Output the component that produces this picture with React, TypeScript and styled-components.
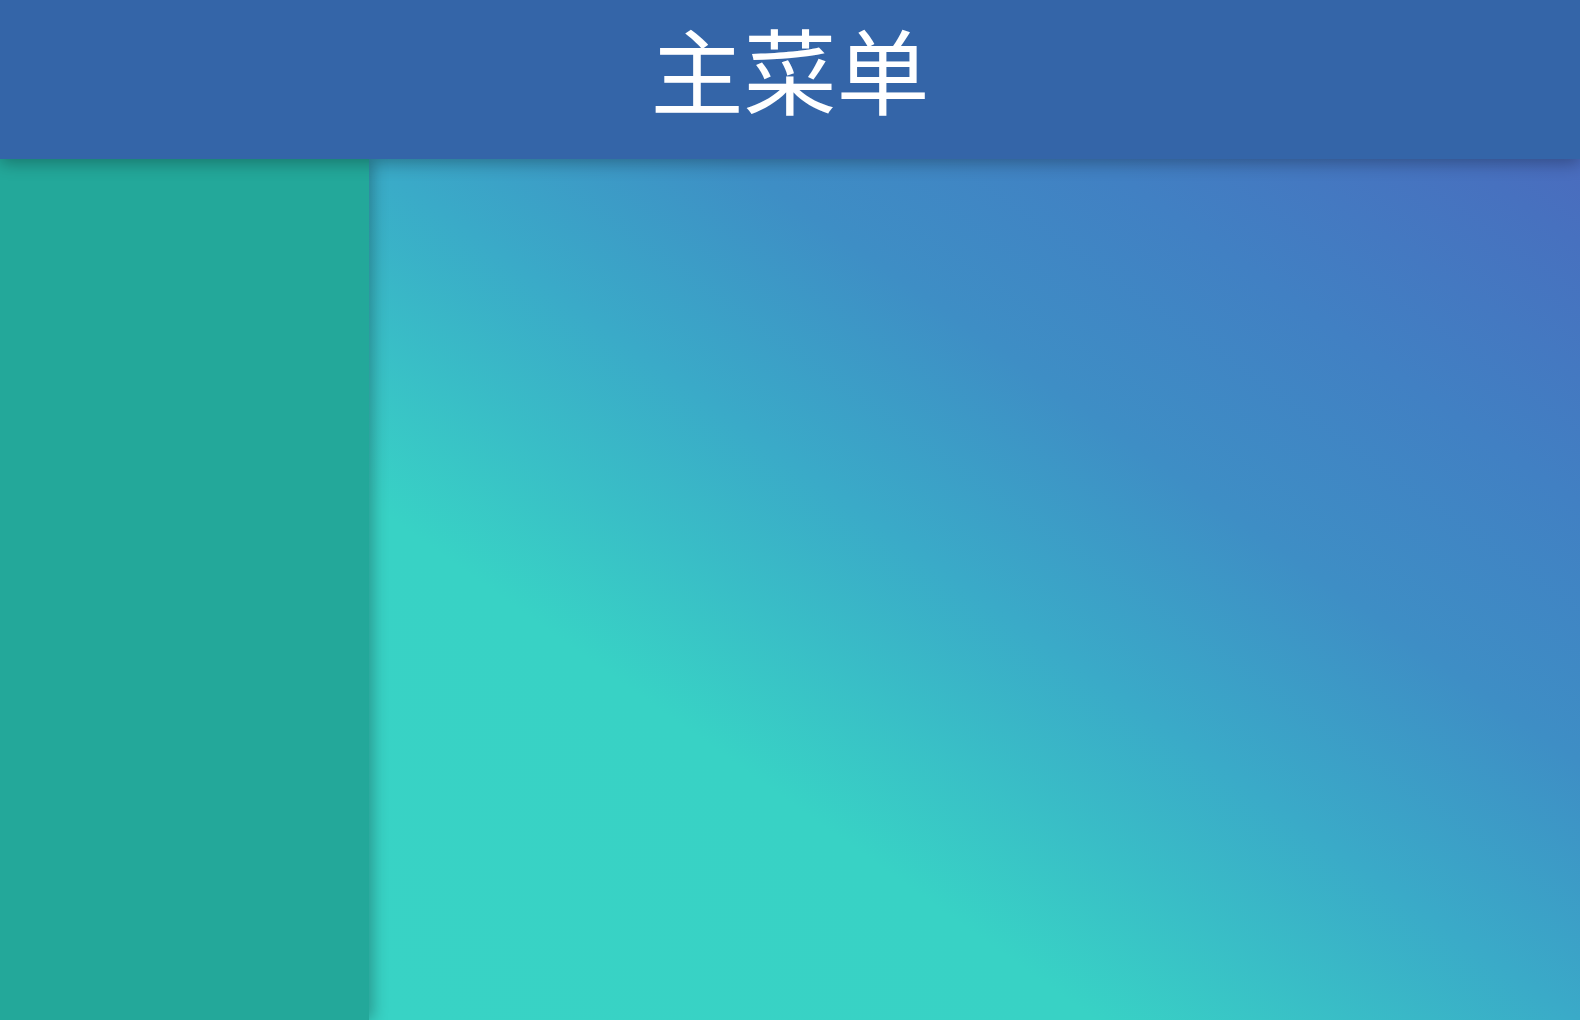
import styled, { createGlobalStyle } from 'styled-components'

const GlobalStyle = createGlobalStyle`
  html, body {
    margin: 0;
    padding: 0;
    height: 100%;
    overflow: hidden;
  }
  #root {
    height: 100%;
  }
`

const StyledPage = styled.div`
  display: flex;
  flex-direction: column;
  width: 100vw;
  height: 100vh;
  font-family: 'Noto Sans CJK JP', 'Noto Sans CJK SC', 'Noto Sans', sans-serif;
`

const StyledHeader = styled.header`
  position: relative;
  z-index: 2;
  flex: 0 0 159px;
  display: flex;
  align-items: center;
  justify-content: center;
  background: #3465a8;
  box-shadow: 0 4px 16px rgba(0, 0, 0, 0.3);
  h1 {
    margin: 0 0 25px;
    color: #ffffff;
    font-size: 93px;
    font-weight: 400;
    line-height: 1;
    letter-spacing: 0;
  }
`

const StyledBody = styled.div`
  flex: 1;
  display: flex;
  min-height: 0;
`

const StyledSidebar = styled.nav`
  position: relative;
  z-index: 1;
  flex: 0 0 369px;
  background: #23a89a;
  box-shadow: 4px 0 14px rgba(0, 0, 0, 0.28);
`

const StyledContent = styled.main`
  flex: 1;
  background: linear-gradient(
    to top right,
    #38d3c5 0%,
    #38d2c5 30%,
    #3aaac8 50%,
    #3e8ec5 65%,
    #4180c3 80%,
    #4771bf 95%,
    #4a6cbe 100%
  );
`

export default function App() {
  return (
    <>
      <GlobalStyle />
      <StyledPage>
        <StyledHeader>
          <h1>主菜单</h1>
        </StyledHeader>
        <StyledBody>
          <StyledSidebar />
          <StyledContent />
        </StyledBody>
      </StyledPage>
    </>
  )
}
